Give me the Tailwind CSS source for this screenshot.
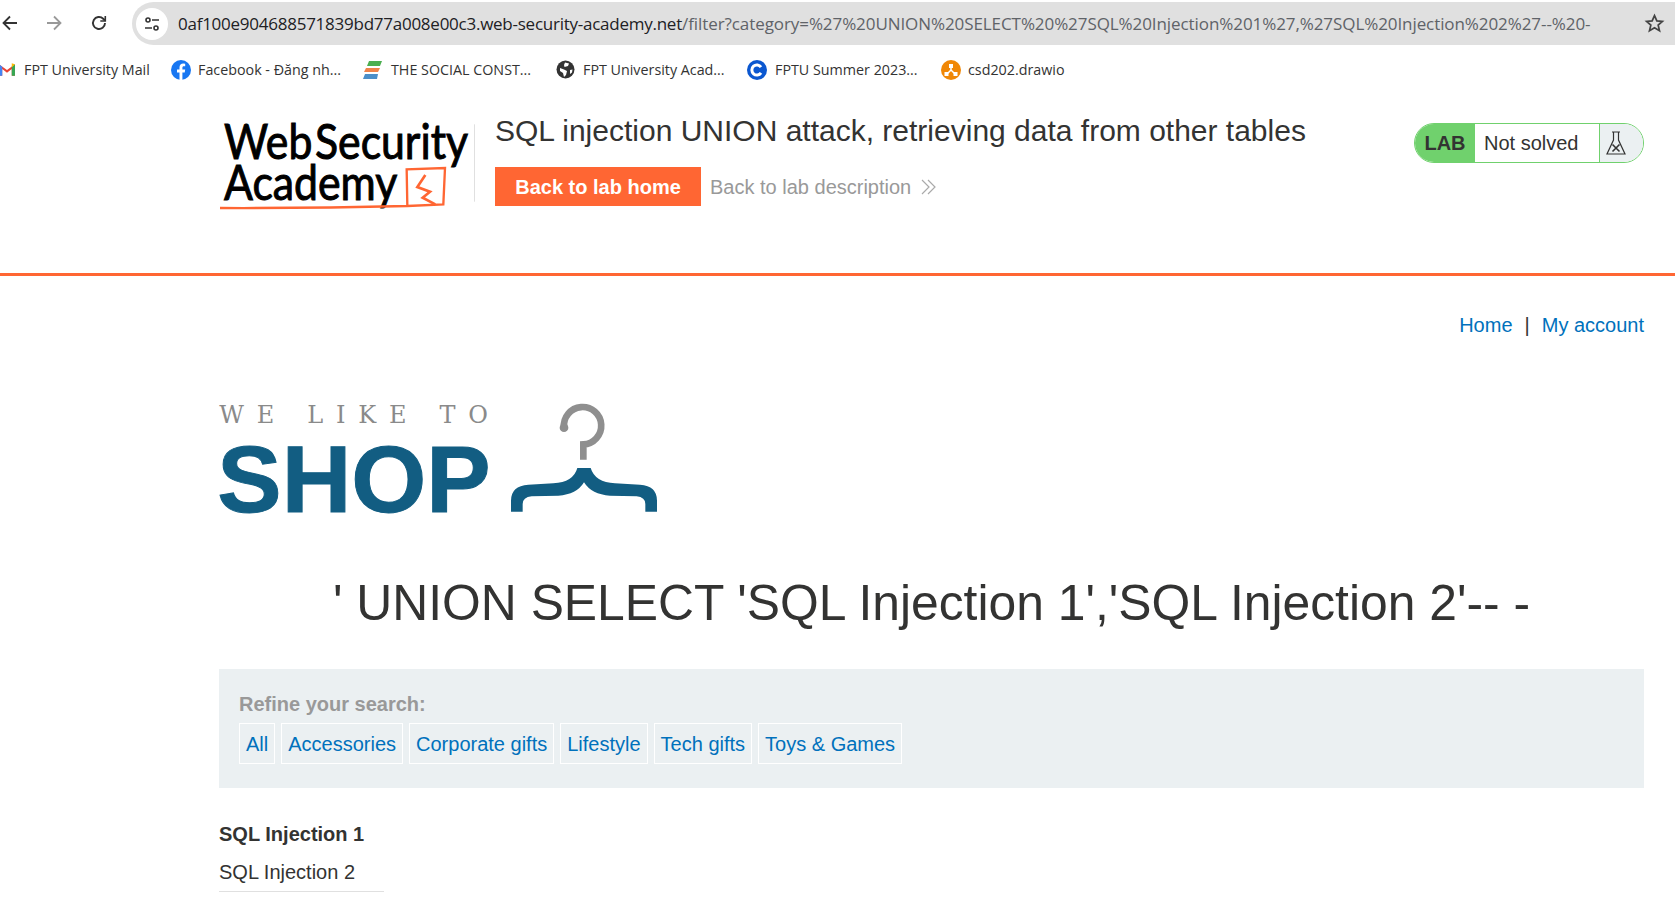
<!DOCTYPE html>
<html lang="en">
<head>
    <meta charset="UTF-8">
    <title>SQL injection UNION attack, retrieving data from other tables</title>
    <script src="https://cdn.jsdelivr.net/npm/@tailwindcss/browser@4"></script>
</head>
<body class="bg-white overflow-hidden font-['Liberation_Sans',sans-serif] text-[#333332]">
    <!-- Browser toolbar -->
    <div class="h-[48px] pt-[2px] flex items-start font-['Open_Sans',sans-serif]">
        <div class="w-[132px] h-[42px] flex items-center shrink-0">
            <svg class="ml-[1px]" width="18" height="18" viewBox="0 0 18 18" fill="none" stroke="#333" stroke-width="1.8"><path d="M16 9H2.500M9 2.500 2.500 9 9 15.500"/></svg>
            <svg class="ml-[26px]" width="18" height="18" viewBox="0 0 18 18" fill="none" stroke="#999" stroke-width="1.8"><path d="M2 9h13.500M9 2.500 15.500 9 9 15.500"/></svg>
            <svg class="ml-[27px]" width="18" height="18" viewBox="0 0 18 18" fill="none" stroke="#333" stroke-width="1.900"><path d="M15 9a6 6 0 1 1-1.800-4.300L15 6.500"/><path d="M15.300 2v5h-5" stroke-width="1.600"/></svg>
        </div>
        <div class="flex-1 h-[43px] rounded-l-full bg-[#e0e0e0] flex items-center pl-[4px] relative">
            <div class="w-[32px] h-[32px] rounded-full bg-white flex items-center justify-center shrink-0">
                <svg width="18" height="18" viewBox="0 0 18 18" fill="none" stroke="#333" stroke-width="1.600"><circle cx="5" cy="5" r="2"/><path d="M9 5h7M2 13h7"/><circle cx="13" cy="13" r="2"/></svg>
            </div>
            <div class="ml-[10px] text-[17px] tracking-[-0.08px] whitespace-nowrap text-[#5f6368]"><span class="text-[#202124] tracking-[-0.25px]">0af100e904688571839bd77a008e00c3.web-security-academy.net</span>/filter?category=%27%20UNION%20SELECT%20%27SQL%20Injection%201%27,%27SQL%20Injection%202%27--%20-</div>
            <svg class="absolute right-[10px] top-[11px]" width="21" height="21" viewBox="0 0 24 24" fill="none" stroke="#444" stroke-width="2"><path d="M12 3l2.700 6 6.300.6-4.800 4.200 1.500 6.400L12 16.800 6.300 20.200l1.500-6.400L3 9.600 9.300 9z"/></svg>
        </div>
    </div>

    <!-- Bookmarks -->
    <div class="h-[43px] flex items-center text-[14.300px] text-[#333] font-['Open_Sans',sans-serif] whitespace-nowrap">
        <svg class="ml-[-2px] shrink-0" width="18" height="15" viewBox="0 0 17 14"><path d="M1 13V2l7.500 5.500L16 2v11h-3V6.500L8.500 10 4 6.500V13z" fill="#ea4335"/><path d="M1 13V2l3 2.500V13z" fill="#4285f4"/><path d="M16 13V2l-3 2.500V13z" fill="#34a853"/><path d="M13 1 16 2l-3 3z" fill="#fbbc04"/></svg>
        <span class="ml-[8px] w-[131px]">FPT University Mail</span>
        <svg class="ml-[16px]" width="20" height="20" viewBox="0 0 20 20"><circle cx="10" cy="10" r="10" fill="#1877f2"/><path d="M8.500 20v-7.500H6V9.500h2.500V7.300c0-2.500 1.500-3.800 3.700-3.800l2 .2v2.500h-1.300c-1.200 0-1.500.7-1.500 1.500v1.800h2.800l-.5 3h-2.300V20z" fill="#fff"/></svg>
        <span class="ml-[7px] w-[146px]">Facebook - Đăng nh...</span>
        <svg class="ml-[19px]" width="20" height="20" viewBox="0 0 20 20"><path d="M6 1h13l-2 5H4z" fill="#4caf50"/><path d="M3 8h14l-2 4H1z" fill="#f0834a"/><path d="M2 14h13l-1 5H0z" fill="#4b8fc9"/></svg>
        <span class="ml-[8px] w-[144px]">THE SOCIAL CONST...</span>
        <svg class="ml-[21px]" width="19" height="19" viewBox="0 0 19 19"><circle cx="9.500" cy="9.500" r="9" fill="#333"/><path d="M9 2.500 13 3.500 12 6 8.500 7 8 5zM4 8l4 1.500 3 1.500-1 4-2 2-1-4-3-2zM14 10l2.500-.5-.5 3-2 1.500z" fill="#fff"/></svg>
        <span class="ml-[8px] w-[142px]">FPT University Acad...</span>
        <svg class="ml-[22px]" width="20" height="20" viewBox="0 0 20 20"><circle cx="10" cy="10" r="10" fill="#0b57d0"/><path d="M14 7.200a5 5 0 1 0 0 5.600" fill="none" stroke="#fff" stroke-width="3"/></svg>
        <span class="ml-[8px] w-[142px]">FPTU Summer 2023...</span>
        <svg class="ml-[24px]" width="20" height="20" viewBox="0 0 20 20"><circle cx="10" cy="10" r="10" fill="#f08705"/><path d="M10 7v3M10 10l-4 4M10 10l4 4" stroke="#fff" stroke-width="1.500"/><rect x="8" y="4" width="4" height="4" fill="#fff"/><rect x="3.500" y="12" width="4" height="4" fill="#fff"/><rect x="12.500" y="12" width="4" height="4" fill="#fff"/></svg>
        <span class="ml-[7px]">csd202.drawio</span>
    </div>

    <!-- Lab header -->
    <header class="h-[185px] border-b-[3px] border-[#ff6633] flex items-start pl-[200px] pr-[31px]">
        <svg class="mt-[10px] shrink-0 overflow-visible" width="300" height="120" viewBox="0 0 900 360">
            <text x="72" y="174" textLength="732" lengthAdjust="spacingAndGlyphs" font-family="Lato" font-size="146" word-spacing="-28" stroke="#000" stroke-width="3" fill="#000">Web Security</text>
            <text x="72" y="297" textLength="520" lengthAdjust="spacingAndGlyphs" font-family="Lato" font-size="146" stroke="#000" stroke-width="3" fill="#000">Academy</text>
            <path d="M60 321 Q340 322 622 315 L620 205 L735 201 L730 310 L622 315" fill="none" stroke="#ff6633" stroke-width="7"/>
            <path d="M676 222 L652 258 L690 272 L668 290 L706 310" fill="none" stroke="#ff6633" stroke-width="8"/>
            <rect x="822" y="70" width="3" height="232" fill="#e0e0e0"/>
        </svg>
        <div class="ml-[-5px] pt-[22px] shrink-0">
            <h2 class="text-[30px] leading-[36px] whitespace-nowrap">SQL injection UNION attack, retrieving data from other tables</h2>
            <div class="mt-[18px] flex items-center">
                <a class="h-[39px] w-[206px] bg-[#ff6633] text-white font-bold text-[20px] flex items-center justify-center">Back to lab home</a>
                <a class="ml-[9px] text-[20px] text-[#999]">Back to lab description</a>
                <svg class="ml-[10px]" width="15" height="16" viewBox="0 0 15 16" fill="none" stroke="#aaa" stroke-width="1.200"><path d="M1 1l7 7-7 7M7 1l7 7-7 7"/></svg>
            </div>
        </div>
        <div class="ml-auto mt-[32px] w-[230px] h-[40px] rounded-full border border-[#70d16d] flex overflow-hidden text-[20px] shrink-0">
            <div class="w-[60px] bg-[#70d16d] font-bold flex items-center justify-center">LAB</div>
            <div class="w-[125px] flex items-center pl-[9px] border-r border-[#70d16d]">Not solved</div>
            <div class="flex-1 bg-[#ebf0f2] flex items-center pl-[5px]">
                <svg width="22" height="26" viewBox="0 0 22 26" fill="none" stroke="#333" stroke-width="1.200"><path d="M7 2h8M8.500 2v8L2 24h18L13.500 10V2"/><path d="M7.500 14.500l7 7M14.500 14.500l-7 7" stroke-width="1.600"/></svg>
            </div>
        </div>
    </header>

    <main class="pl-[219px] pr-[31px]">
        <!-- Top links -->
        <div class="h-[65px] pt-[33px] flex justify-end items-center text-[20px] text-[#0071bc]">
            <a>Home</a><span class="mx-[12px] text-[#333332]">|</span><a>My account</a>
        </div>

        <!-- Shop logo -->
        <svg class="ml-[-19px] mt-[48px] overflow-visible" width="480" height="140" viewBox="0 0 1440 420">
            <text x="58" y="103" textLength="806" font-family="DejaVu Serif" font-size="72" fill="#8a8a8a">WE LIKE TO</text>
            <text x="52" y="370" textLength="820" lengthAdjust="spacingAndGlyphs" font-family="Liberation Sans" font-weight="700" font-size="286" stroke="#125d82" stroke-width="3" fill="#125d82">SHOP</text>
            <path d="M1092 116 A56 56 0 1 1 1150 166 V212" fill="none" stroke="#8f8f8f" stroke-width="20"/>
            <circle cx="1092" cy="116" r="13" fill="#8f8f8f"/>
            <path d="M933 368 V335 Q933 290 985 287 L1060 283 Q1120 280 1132 237 H1172 Q1185 280 1245 283 L1320 287 Q1371 290 1371 335 V368 H1336 V345 Q1336 325 1310 322 L1230 320 Q1175 317 1152 280 Q1130 317 1075 320 L995 322 Q968 325 968 345 V368 Z" fill="#125d82"/>
        </svg>

        <h1 class="mt-[46px] text-center text-[49.800px] leading-[56px] whitespace-nowrap">' UNION SELECT 'SQL Injection 1','SQL Injection 2'-- -</h1>

        <!-- Filter -->
        <section class="mt-[38px] h-[119px] bg-[#ebf0f2] pl-[20px] pt-[23px]">
            <p class="text-[20px] leading-[24px] font-bold text-[#999]">Refine your search:</p>
            <div class="mt-[7px] flex gap-[6px] text-[20px] text-[#0071bc]">
                <a class="h-[41px] px-[6px] border border-white flex items-center">All</a>
                <a class="h-[41px] px-[6px] border border-white flex items-center">Accessories</a>
                <a class="h-[41px] px-[6px] border border-white flex items-center">Corporate gifts</a>
                <a class="h-[41px] px-[6px] border border-white flex items-center">Lifestyle</a>
                <a class="h-[41px] px-[6px] border border-white flex items-center">Tech gifts</a>
                <a class="h-[41px] px-[6px] border border-white flex items-center">Toys &amp; Games</a>
            </div>
        </section>

        <!-- Results -->
        <div class="mt-[33px] w-[165px] text-[20px] whitespace-nowrap">
            <p class="font-bold leading-[26px]">SQL Injection 1</p>
            <p class="mt-[12px] leading-[26px] pb-[6px] border-b border-[#e0e0e0]">SQL Injection 2</p>
        </div>
    </main>
</body>
</html>
